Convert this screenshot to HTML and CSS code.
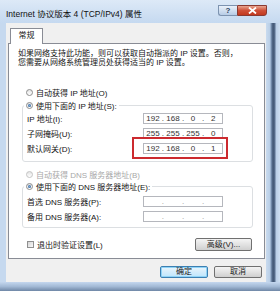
FILE: index.html
```html
<!DOCTYPE html>
<html lang="zh-CN">
<head>
  <meta charset="UTF-8">
  <title>Internet 协议版本 4 (TCP/IPv4) 属性</title>
  <link rel="stylesheet" href="styles.css">
</head>
<body>
  <div class="window">
    <div class="titlebar">
      <span class="title">Internet 协议版本 4 (TCP/IPv4) 属性</span>
      <div class="caption">
        <span class="cap help">?</span>
        <span class="cap close">
          <svg width="9" height="7" viewBox="0 0 9 7"><path d="M1 0.5 L8 6.5 M8 0.5 L1 6.5" stroke="#fff" stroke-width="1.8"/></svg>
        </span>
      </div>
    </div>

    <div class="main">
      <div class="client">
        <div class="tabs"><span class="tab">常规</span></div>

        <div class="panel">
          <p class="desc">如果网络支持此功能，则可以获取自动指派的 IP 设置。否则，<br>您需要从网络系统管理员处获得适当的 IP 设置。</p>

          <div class="option"><span class="radio"></span>自动获得 IP 地址(O)</div>

          <fieldset class="group ip-group">
            <legend><span class="radio on"></span>使用下面的 IP 地址(S):</legend>
            <div class="field">
              <span class="label">IP 地址(I):</span>
              <span class="ip"><span class="oct">192</span>.<span class="oct">168</span>.<span class="oct">0</span>.<span class="oct">2</span></span>
            </div>
            <div class="field">
              <span class="label">子网掩码(U):</span>
              <span class="ip"><span class="oct">255</span>.<span class="oct">255</span>.<span class="oct">255</span>.<span class="oct">0</span></span>
            </div>
            <div class="field">
              <span class="label">默认网关(D):</span>
              <span class="ip"><span class="oct">192</span>.<span class="oct">168</span>.<span class="oct">0</span>.<span class="oct">1</span><span class="mark"></span></span>
            </div>
          </fieldset>

          <div class="option disabled dns-auto"><span class="radio"></span>自动获得 DNS 服务器地址(B)</div>

          <fieldset class="group dns-group">
            <legend><span class="radio on"></span>使用下面的 DNS 服务器地址(E):</legend>
            <div class="field">
              <span class="label">首选 DNS 服务器(P):</span>
              <span class="ip empty"><span class="oct"></span>.<span class="oct"></span>.<span class="oct"></span>.<span class="oct"></span></span>
            </div>
            <div class="field">
              <span class="label">备用 DNS 服务器(A):</span>
              <span class="ip empty"><span class="oct"></span>.<span class="oct"></span>.<span class="oct"></span>.<span class="oct"></span></span>
            </div>
          </fieldset>

          <div class="footer-row">
            <div class="check-label"><span class="checkbox"></span>退出时验证设置(L)</div>
            <span class="btn advanced">高级(V)...</span>
          </div>
        </div>

        <div class="buttons">
          <span class="btn default">确定</span>
          <span class="btn">取消</span>
        </div>
      </div>
      <div class="edge"></div>
    </div>
    <div class="frame-bottom"></div>
  </div>
</body>
</html>
```

FILE: styles.css
```css
body {
  margin: 0;
  font-family: 'Liberation Sans', 'Noto Sans CJK SC', sans-serif;
  font-size: 8px;
  color: #141414;
  background-color: #c6d9ef;
}

.window {
  width: 280px;
  height: 291px;
  display: flex;
  flex-direction: column;
  overflow: hidden;
  background-color: #c6d9ef;
}

.titlebar {
  height: 23px;
  display: flex;
  align-items: flex-start;
  background: linear-gradient(#dde9f7, #c5d9f0);
}

.title {
  margin: 9px 0 0 6px;
  line-height: 10px;
  font-size: 8.5px;
  color: #111;
}

.caption {
  margin: 5px 13px 0 auto;
  display: flex;
}

.cap {
  height: 9px;
  display: flex;
  align-items: center;
  justify-content: center;
  border: 1px solid #7d93b0;
  line-height: 9px;
}

.help {
  width: 18px;
  border-radius: 0 0 0 3px;
  border-right: none;
  background: linear-gradient(#eaf1fa, #b7cce6);
  color: #2b3f5c;
  font-weight: bold;
}

.close {
  width: 28px;
  border-color: #8a3a32;
  border-radius: 0 0 3px 0;
  background: linear-gradient(#e8a591, #cf5038 50%, #c2391f);
}

.main {
  flex: 1;
  display: flex;
}

.client {
  margin-left: 6px;
  width: 260px;
  display: flex;
  flex-direction: column;
  background-color: #f0f0f0;
}

.edge {
  flex: 1;
  background: linear-gradient(90deg, #c9dbef 0, #b9cee6 4px, #7f98b8 5px, #3f5472 7px, #5b7190 9px, #b8cde6 10px, #cddef1 14px);
}

.frame-bottom {
  height: 9px;
  background: linear-gradient(#c4d7ee, #a2b9d5 50%, #6f87a6);
}

.tabs {
  margin-top: 5px;
  padding-left: 4px;
  display: flex;
}

.tab {
  position: relative;
  z-index: 1;
  width: 31px;
  height: 15px;
  margin-bottom: -1px;
  border: 1px solid #898c95;
  border-bottom: none;
  background-color: #fff;
  line-height: 13px;
  text-align: center;
}

.panel {
  height: 214px;
  margin: 0 1px 0 2px;
  border: 1px solid #898c95;
  background-color: #fff;
}

.desc {
  margin: 5px 0 0 9px;
  line-height: 9px;
  white-space: nowrap;
}

.option {
  height: 12px;
  margin: 19px 0 0 17px;
  display: flex;
  align-items: center;
  white-space: nowrap;
}

.radio {
  width: 5px;
  height: 5px;
  margin-right: 3px;
  border: 1px solid #8d8d8d;
  border-radius: 50%;
  background: linear-gradient(#e4e4e4, #fff);
  display: flex;
  align-items: center;
  justify-content: center;
  flex-shrink: 0;
}

.radio.on::after {
  content: "";
  width: 3px;
  height: 3px;
  border-radius: 50%;
  background: radial-gradient(#7aa8d8, #1d4f86);
}

.disabled {
  color: #a8a8a8;
}

.disabled .radio {
  border-color: #c4c4c4;
}

.group {
  margin: 1px 11px 0 13px;
  padding: 0 0 5px 4px;
  border: 1px solid #dcdfe2;
  border-radius: 3px;
}

.group legend {
  margin-left: -3px;
  padding: 0 2px;
  height: 12px;
  display: flex;
  align-items: center;
  white-space: nowrap;
}

.dns-auto {
  margin-top: 6px;
}

.dns-group {
  margin-top: 0;
  padding: 2px 0 3px 4px;
}

.field {
  height: 15px;
  display: flex;
  align-items: center;
}

.label {
  width: 116px;
  white-space: nowrap;
}

.ip {
  position: relative;
  width: 78px;
  height: 9px;
  border: 1px solid #b5b7bd;
  background-color: #fff;
  display: flex;
  align-items: center;
  line-height: 9px;
  color: #333;
}

.ip .oct {
  width: 18px;
  text-align: center;
}

.ip.empty {
  color: #9a9a9a;
}

/* 红框标注 */
.mark {
  position: absolute;
  left: -12px;
  right: -6px;
  top: -7px;
  bottom: -6px;
  border: 2px solid #cc2a2f;
}

.footer-row {
  margin: 9px 12px 0 18px;
  display: flex;
  align-items: flex-start;
  justify-content: space-between;
}

.check-label {
  height: 14px;
  display: flex;
  align-items: center;
}

.checkbox {
  width: 5px;
  height: 5px;
  margin-right: 3px;
  border: 1px solid #8f8f8f;
  background: linear-gradient(135deg, #d4d4d4, #fafafa);
}

.btn {
  height: 10px;
  padding: 0 4px;
  border: 1px solid #707070;
  border-radius: 2px;
  background: linear-gradient(#f4f4f4, #e2e2e2 50%, #cfcfcf);
  display: flex;
  align-items: center;
  justify-content: center;
  line-height: 10px;
  color: #222;
}

.advanced {
  width: 47px;
  height: 11px;
  margin-top: 1px;
}

.buttons {
  margin: 7px 4px 0 0;
  display: flex;
  justify-content: flex-end;
  gap: 6px;
}

.buttons .btn {
  width: 38px;
}

.btn.default {
  border-color: #3c7fb1;
  background: linear-gradient(#eaf6fd, #d4ecfb 50%, #bee6fd);
  box-shadow: inset 0 0 0 1px #8fd3f7;
}
```
